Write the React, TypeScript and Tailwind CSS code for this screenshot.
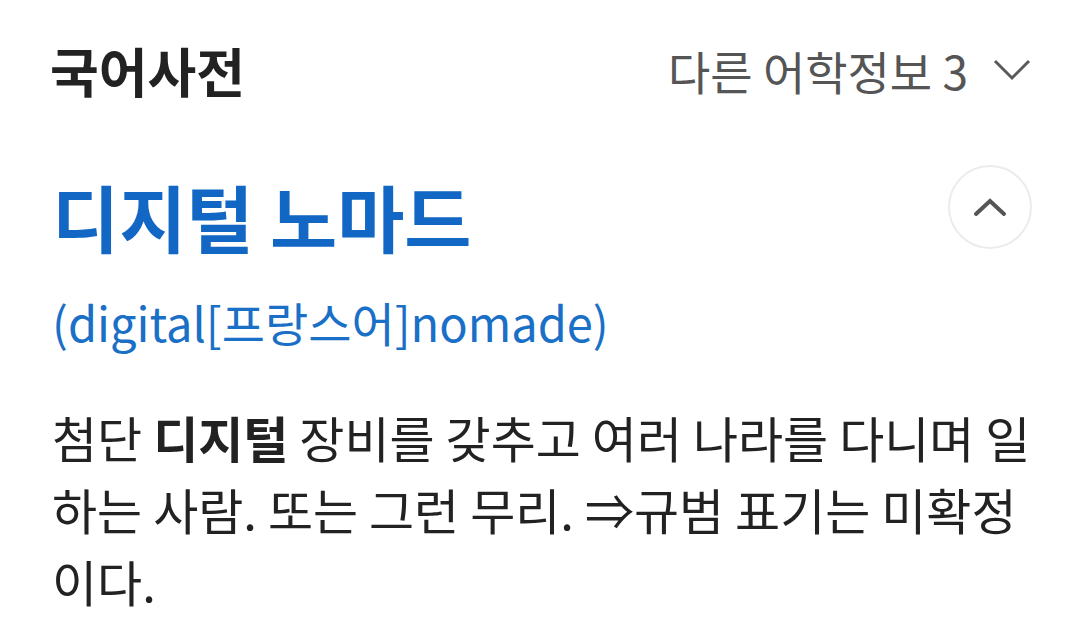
import React from 'react';

const font = { fontFamily: '"Noto Sans CJK KR", "Noto Sans", sans-serif' };

const App: React.FC = () => {
  return (
    <div className="w-[1080px] h-[643px] bg-white overflow-hidden" style={font}>
      <div className="flex items-center justify-between pl-[50px] pr-[49px] pt-[36px]">
        <h2 className="text-[53px] font-bold text-[#222] leading-[68px]">국어사전</h2>
        <button className="flex items-center gap-[25px] text-[46px] text-[#555] leading-[68px]">
          <span>다른 어학정보 3</span>
          <svg width="38" height="22" viewBox="0 0 38 22" fill="none" stroke="#5a5a5a" strokeWidth="3">
            <path d="M2 2 L19 19 L36 2" />
          </svg>
        </button>
      </div>

      <div className="flex items-start justify-between pl-[52px] pr-[48px] mt-[65px]">
        <div>
          <h1 className="text-[73px] font-bold text-[#1167c3] leading-[92px]">디지털 노마드</h1>
          <p className="text-[47px] text-[#1a6fc6] leading-[60px] mt-[31px]">(digital[프랑스어]nomade)</p>
        </div>
        <button className="w-[84px] h-[84px] rounded-full border-2 border-[#ececec] flex items-center justify-center mt-[-4px]">
          <svg width="34" height="19" viewBox="0 0 34 19" fill="none" stroke="#555" strokeWidth="4" strokeLinecap="round">
            <path d="M3 16 L17 3 L31 16" />
          </svg>
        </button>
      </div>

      <p className="pl-[52px] pr-[40px] mt-[49px] text-[49px] leading-[72px] text-[#222]">
        첨단 <b className="font-bold">디지털</b> 장비를 갖추고 여러 나라를 다니며 일하는 사람. 또는 그런 무리. ⇒규범 표기는 미확정이다.
      </p>
    </div>
  );
};

export default App;
